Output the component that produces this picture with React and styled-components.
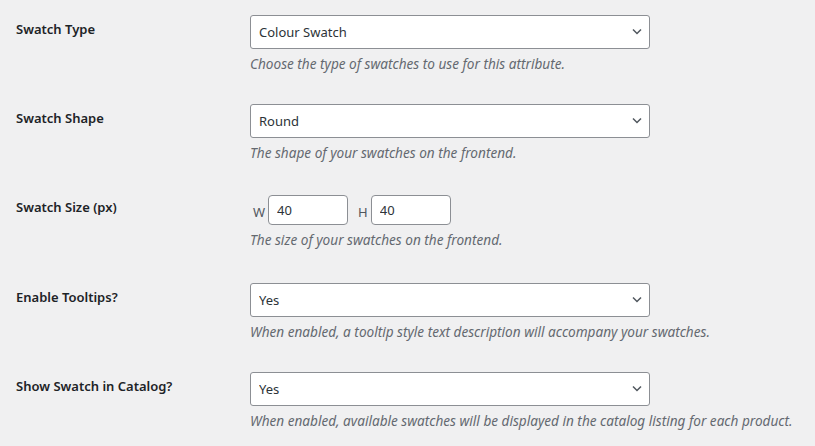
import React from "react";
import styled, { createGlobalStyle } from "styled-components";

const GlobalStyle = createGlobalStyle`
  html, body {
    margin: 0;
    padding: 0;
    background: #f0f0f1;
  }
  body {
    font-family: "Noto Sans", "Open Sans", sans-serif;
    font-size: 13px;
    color: #3c434a;
  }
`;

const FormTable = styled.table`
  border-collapse: collapse;
  width: 815px;
  th, td {
    vertical-align: top;
    text-align: left;
  }
`;

const Row = styled.tr`
  height: ${(p) => (p.$tall ? "90px" : "89px")};
`;

const Label = styled.th`
  width: 218px;
  padding: 20px 10px 0 16px;
  font-size: 13px;
  font-weight: 600;
  line-height: 18px;
  color: #1d2327;
`;

const Field = styled.td`
  padding: ${(p) => (p.$compact ? "17px 6px 0" : "15px 6px 0")};
`;

const SelectWrap = styled.div`
  position: relative;
  width: 400px;
  height: 34px;
`;

const Select = styled.select`
  appearance: none;
  width: 100%;
  height: 100%;
  box-sizing: border-box;
  margin: 0;
  padding: 0 24px 0 8px;
  border: 1px solid #8c8f94;
  border-radius: 3px;
  background: #fff;
  font-family: inherit;
  font-size: 13px;
  color: #2c3338;
  outline: none;
`;

const Chevron = styled.svg`
  position: absolute;
  right: 8px;
  top: 13px;
  pointer-events: none;
`;

const Description = styled.p`
  margin: 5px 0 0;
  font-style: italic;
  font-size: 13.6px;
  line-height: 20px;
  color: #646970;
`;

const SizeRow = styled.div`
  display: flex;
  align-items: center;
  height: 30px;
`;

const SizeLetter = styled.span`
  font-size: 13px;
  color: #50575e;
  margin: ${(p) => (p.$first ? "3px 3px 0 3px" : "3px 3px 0 10px")};
`;

const NumberInput = styled.input`
  width: 80px;
  height: 30px;
  box-sizing: border-box;
  margin: 0;
  padding: 0 8px;
  border: 1px solid #8c8f94;
  border-radius: 4px;
  background: #fff;
  font-family: inherit;
  font-size: 13px;
  color: #2c3338;
  outline: none;
`;

function Dropdown({ value, options }) {
  return (
    <SelectWrap>
      <Select defaultValue={value}>
        {options.map((o) => (
          <option key={o}>{o}</option>
        ))}
      </Select>
      <Chevron width="10" height="7" viewBox="0 0 10 7">
        <path d="M1 1.5 L5 5.5 L9 1.5" fill="none" stroke="#50575e" strokeWidth="1.5" />
      </Chevron>
    </SelectWrap>
  );
}

const rows = [
  {
    label: "Swatch Type",
    value: "Colour Swatch",
    options: ["Colour Swatch", "Image Swatch", "Label Swatch"],
    desc: "Choose the type of swatches to use for this attribute.",
  },
  {
    label: "Swatch Shape",
    value: "Round",
    options: ["Round", "Square"],
    desc: "The shape of your swatches on the frontend.",
  },
  {
    label: "Swatch Size (px)",
    size: true,
    desc: "The size of your swatches on the frontend.",
  },
  {
    label: "Enable Tooltips?",
    value: "Yes",
    options: ["Yes", "No"],
    desc: "When enabled, a tooltip style text description will accompany your swatches.",
  },
  {
    label: "Show Swatch in Catalog?",
    value: "Yes",
    options: ["Yes", "No"],
    desc: "When enabled, available swatches will be displayed in the catalog listing for each product.",
  },
];

export default function App() {
  return (
    <>
      <GlobalStyle />
      <FormTable>
        <tbody>
          {rows.map((r) => (
            <Row key={r.label} $tall={r.size}>
              <Label scope="row">{r.label}</Label>
              <Field $compact={r.size}>
                {r.size ? (
                  <SizeRow>
                    <SizeLetter $first>W</SizeLetter>
                    <NumberInput type="text" defaultValue="40" />
                    <SizeLetter>H</SizeLetter>
                    <NumberInput type="text" defaultValue="40" />
                  </SizeRow>
                ) : (
                  <Dropdown value={r.value} options={r.options} />
                )}
                <Description>{r.desc}</Description>
              </Field>
            </Row>
          ))}
        </tbody>
      </FormTable>
    </>
  );
}
